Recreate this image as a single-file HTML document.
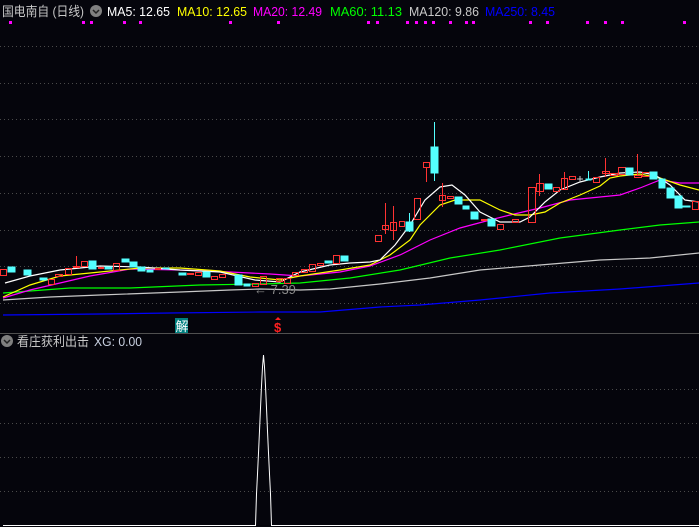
<!DOCTYPE html>
<html><head><meta charset="utf-8"><style>
html,body{margin:0;padding:0;background:#05050c;width:699px;height:527px;overflow:hidden}
svg{display:block}
text{font-family:"Liberation Sans","Noto Sans CJK SC",sans-serif;font-size:13px}
</style></head><body>
<svg width="699" height="527" viewBox="0 0 699 527" xmlns="http://www.w3.org/2000/svg">
<rect width="699" height="527" fill="#05050c"/>
<g stroke="#4a4a4a" stroke-width="1" stroke-dasharray="1 3">
<line x1="0" y1="46.5" x2="699" y2="46.5"/><line x1="0" y1="83.5" x2="699" y2="83.5"/>
<line x1="0" y1="119.5" x2="699" y2="119.5"/><line x1="0" y1="156.5" x2="699" y2="156.5"/>
<line x1="0" y1="193.5" x2="699" y2="193.5"/><line x1="0" y1="230.5" x2="699" y2="230.5"/>
<line x1="0" y1="266.5" x2="699" y2="266.5"/><line x1="0" y1="303.5" x2="699" y2="303.5"/>
<line x1="0" y1="389.5" x2="699" y2="389.5"/><line x1="0" y1="423.5" x2="699" y2="423.5"/>
<line x1="0" y1="457.5" x2="699" y2="457.5"/><line x1="0" y1="491.5" x2="699" y2="491.5"/>
</g>
<!-- header -->
<text x="2" y="16" fill="#c8c8c8" textLength="82" lengthAdjust="spacingAndGlyphs">国电南自 (日线)</text>
<circle cx="96" cy="11" r="6" fill="#808080"/><path d="M93 10l3 3 3-3" stroke="#222" stroke-width="1.5" fill="none"/>
<text x="107" y="16" fill="#ffffff" textLength="63" lengthAdjust="spacingAndGlyphs">MA5: 12.65</text>
<text x="177" y="16" fill="#ffff00" textLength="70" lengthAdjust="spacingAndGlyphs">MA10: 12.65</text>
<text x="253" y="16" fill="#ff00ff" textLength="69" lengthAdjust="spacingAndGlyphs">MA20: 12.49</text>
<text x="330" y="16" fill="#00ff00" textLength="72" lengthAdjust="spacingAndGlyphs">MA60: 11.13</text>
<text x="409" y="16" fill="#c8c8c8" textLength="70" lengthAdjust="spacingAndGlyphs">MA120: 9.86</text>
<text x="485" y="16" fill="#0000ff" textLength="70" lengthAdjust="spacingAndGlyphs">MA250: 8.45</text>
<g fill="#ff00ff">
<rect x="9" y="21" width="3" height="3"/><rect x="82" y="21" width="3" height="3"/><rect x="90" y="21" width="3" height="3"/><rect x="123" y="21" width="3" height="3"/><rect x="139" y="21" width="3" height="3"/><rect x="229" y="21" width="3" height="3"/><rect x="277" y="21" width="3" height="3"/><rect x="367" y="21" width="3" height="3"/><rect x="376" y="21" width="3" height="3"/><rect x="406" y="21" width="3" height="3"/><rect x="415" y="21" width="3" height="3"/><rect x="424" y="21" width="3" height="3"/><rect x="432" y="21" width="3" height="3"/><rect x="449" y="21" width="3" height="3"/><rect x="465" y="21" width="3" height="3"/><rect x="472" y="21" width="3" height="3"/><rect x="529" y="21" width="3" height="3"/><rect x="546" y="21" width="3" height="3"/><rect x="586" y="21" width="3" height="3"/><rect x="604" y="21" width="3" height="3"/><rect x="621" y="21" width="3" height="3"/><rect x="683" y="21" width="3" height="3"/>
</g>
<!-- MAs -->
<g fill="none" stroke-width="1.2">
<polyline stroke="#0000ff" points="3,315 100,314 170,313 260,312 320,312 380,307 420,305 480,300 550,293 620,289 699,283"/>
<polyline stroke="#c8c8c8" points="3,300 50,297 100,295 180,292 230,290 260,289 300,290 330,289 380,284 430,278 480,270 540,265 600,260 650,258 699,253"/>
<polyline stroke="#00ff00" points="3,293 30,291 70,288 130,288 200,285 260,284 300,283 350,278 400,270 450,258 500,250 560,238 620,230 660,225 699,222"/>
<polyline stroke="#ff00ff" points="3,298 30,290 60,283 90,276 130,269 180,270 230,272 270,274 300,276 340,272 370,266 400,255 430,240 460,228 490,220 510,215 540,208 570,200 600,197 620,195 640,188 660,180 680,183 699,183"/>
<polyline stroke="#ffff00" points="3,297 30,285 60,276 100,272 140,268 180,268 220,271 250,277 280,280 300,276 340,270 370,265 390,255 410,240 420,225 440,205 455,200 480,200 500,210 515,215 530,215 545,212 560,203 580,195 600,186 610,178 620,176 640,174 660,178 680,185 699,190"/>
<polyline stroke="#ffffff" points="5,283 30,276 60,270 100,266 140,267 180,270 220,272 255,280 280,282 300,272 330,265 350,263 370,262 380,260 395,245 410,225 425,200 440,187 452,185 465,195 480,212 500,222 520,222 530,217 545,202 560,190 580,182 600,177 620,173 640,172 655,175 670,185 685,200 699,202"/>
</g>
<!-- candles red -->
<g fill="none" stroke="#ff3232" stroke-width="1">
<rect x="0.5" y="269.5" width="6" height="6"/><rect x="48.5" y="279.5" width="6" height="5"/><rect x="55.5" y="274.5" width="7" height="2"/><rect x="65.5" y="268.5" width="6" height="6"/><rect x="73.5" y="266.5" width="6" height="1"/><line x1="76.5" y1="256" x2="76.5" y2="266"/><rect x="81.5" y="261.5" width="6" height="5"/><rect x="98.5" y="267.5" width="5" height="1"/><rect x="113.5" y="263.5" width="6" height="7"/><rect x="155.5" y="268.5" width="5" height="1"/><rect x="187.5" y="273.5" width="6" height="1"/><rect x="195.5" y="272.5" width="6" height="3"/><rect x="211.5" y="276.5" width="6" height="3"/><rect x="219.5" y="274.5" width="6" height="3"/><rect x="252.5" y="283.5" width="6" height="3"/><rect x="260.5" y="276.5" width="6" height="8"/><rect x="276.5" y="278.5" width="6" height="3"/><rect x="284.5" y="278.5" width="6" height="5"/><rect x="292.5" y="272.5" width="6" height="3"/><rect x="301.5" y="269.5" width="6" height="3"/><rect x="309.5" y="264.5" width="6" height="7"/><rect x="317.5" y="263.5" width="6" height="2"/><rect x="333.5" y="255.5" width="6" height="8"/>
<rect x="375.5" y="235.5" width="6" height="6"/><rect x="382.5" y="225.5" width="6" height="4"/><line x1="385.5" y1="203" x2="385.5" y2="234"/><rect x="390.5" y="222.5" width="6" height="8"/><line x1="393.5" y1="206" x2="393.5" y2="240"/><rect x="399.5" y="221.5" width="5" height="5"/><rect x="414.5" y="198.5" width="6" height="21"/><rect x="423.5" y="162.5" width="6" height="5"/><line x1="426.5" y1="167" x2="426.5" y2="182"/><rect x="439.5" y="195.5" width="6" height="5"/><line x1="442.5" y1="183" x2="442.5" y2="207"/><rect x="447.5" y="196.5" width="6" height="2"/><rect x="481.5" y="219.5" width="6" height="1"/><rect x="497.5" y="224.5" width="6" height="5"/><rect x="512.5" y="219.5" width="6" height="3"/><rect x="528.5" y="187.5" width="7" height="35"/><rect x="536.5" y="183.5" width="7" height="8"/><line x1="539.5" y1="174" x2="539.5" y2="196"/><rect x="553.5" y="187.5" width="6" height="4"/><rect x="561.5" y="178.5" width="6" height="11"/><line x1="564.5" y1="172" x2="564.5" y2="189"/><rect x="569.5" y="176.5" width="6" height="3"/><rect x="593.5" y="177.5" width="6" height="5"/><rect x="602.5" y="171.5" width="7" height="2"/><line x1="605.5" y1="158" x2="605.5" y2="177"/><rect x="610.5" y="173.5" width="7" height="2"/><rect x="618.5" y="167.5" width="7" height="7"/><rect x="634.5" y="175.5" width="7" height="2"/><line x1="637.5" y1="154" x2="637.5" y2="175"/><rect x="642.5" y="172.5" width="7" height="4"/><rect x="692.5" y="201.5" width="6" height="8"/>
</g>
<!-- candles cyan -->
<g fill="#54ffff" stroke="#54ffff">
<rect x="8" y="267" width="7" height="5"/><rect x="24" y="270" width="7" height="5"/><rect x="40" y="278" width="7" height="2"/><rect x="89" y="261" width="7" height="8"/><rect x="105" y="267" width="7" height="2"/><rect x="122" y="259" width="7" height="3"/><rect x="130" y="262" width="7" height="5"/><rect x="138" y="267" width="7" height="4"/><rect x="147" y="270" width="6" height="2"/><rect x="163" y="268" width="6" height="1"/><rect x="179" y="273" width="7" height="2"/><rect x="203" y="272" width="7" height="5"/><rect x="235" y="275" width="7" height="10"/><rect x="244" y="284" width="6" height="2"/><rect x="325" y="261" width="7" height="2"/><rect x="341" y="256" width="7" height="5"/>
<rect x="406" y="222" width="7" height="9"/><line x1="409.5" y1="213" x2="409.5" y2="232"/><rect x="431" y="147" width="7" height="26"/><line x1="434.5" y1="122" x2="434.5" y2="181"/><rect x="455" y="197" width="7" height="7"/><rect x="463" y="206" width="6" height="3"/><rect x="471" y="212" width="7" height="7"/><rect x="488" y="219" width="7" height="7"/><rect x="545" y="184" width="7" height="5"/><rect x="586" y="179" width="5" height="1"/><line x1="588.5" y1="171" x2="588.5" y2="180"/><rect x="626" y="168" width="7" height="7"/><rect x="650" y="172" width="7" height="7"/><rect x="659" y="179" width="6" height="9"/><rect x="667" y="188" width="7" height="10"/><rect x="675" y="196" width="7" height="12"/><rect x="683" y="206" width="7" height="1"/>
</g>
<path d="M577 179h6M580 176v6" stroke="#c8c8c8"/>
<text x="254" y="294" fill="#8a8a8a" font-size="12">← 7.39</text>
<!-- marks -->
<rect x="175" y="318" width="13" height="15" fill="#008080"/>
<text x="175.5" y="331" fill="#ffffff" font-size="12">解</text>
<text x="274" y="332" fill="#ff2020" font-size="12" font-weight="bold">$</text>
<path d="M275 320l3-3 3 3z" fill="#ff2020"/>
<line x1="0" y1="333.5" x2="699" y2="333.5" stroke="#505050"/>
<!-- lower -->
<circle cx="7" cy="341" r="6" fill="#808080"/><path d="M4 340l3 3 3-3" stroke="#222" stroke-width="1.5" fill="none"/>
<text x="17" y="346" fill="#c8c8c8" textLength="72" lengthAdjust="spacingAndGlyphs">看庄获利出击</text>
<text x="94" y="346" fill="#c8d0e0" textLength="48" lengthAdjust="spacingAndGlyphs">XG: 0.00</text>
<polyline fill="none" stroke="#ffffff" stroke-width="1" points="3,525.5 255.5,525.5 256.5,494 257.5,474 258.5,453 259.5,431 260.5,408 261.5,386 262.5,367 263.5,355 264.5,367 265.5,386 266.5,408 267.5,431 268.5,453 269.5,474 270.5,494 271.5,525.5 699,525.5"/>
</svg>
</body></html>
